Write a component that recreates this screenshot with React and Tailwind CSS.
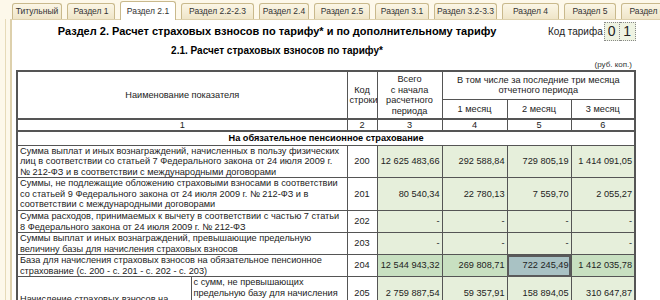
import React from "react";

const tabs = [
  { label: "Титульный", w: "w-[50px]" },
  { label: "Раздел 1", w: "w-[48px]" },
  { label: "Раздел 2.1", w: "w-[56px]", active: true },
  { label: "Раздел 2.2-2.3", w: "w-[73px]" },
  { label: "Раздел 2.4", w: "w-[50px]" },
  { label: "Раздел 2.5", w: "w-[56px]" },
  { label: "Раздел 3.1", w: "w-[54px]" },
  { label: "Раздел 3.2-3.3", w: "w-[63px]" },
  { label: "Раздел 4", w: "w-[57px]" },
  { label: "Раздел 5", w: "w-[52px]" },
  { label: "Раздел 6", w: "w-[52px]" },
];

const rows = [
  {
    name: "Сумма выплат и иных вознаграждений, начисленных в пользу физических лиц в соответствии со статьей 7 Федерального закона от 24 июля 2009 г. № 212-ФЗ и в соответствии с международными договорами",
    code: "200",
    h: "h-[32px]",
    vals: ["12 625 483,66", "292 588,84", "729 805,19", "1 414 091,05"],
  },
  {
    name: "Суммы, не подлежащие обложению страховыми взносами в соответствии со статьей 9 Федерального закона от 24 июля 2009 г. № 212-ФЗ и в соответствии с международными договорами",
    code: "201",
    h: "h-[33px]",
    vals: ["80 540,34", "22 780,13", "7 559,70", "2 055,27"],
  },
  {
    name: "Сумма расходов, принимаемых к вычету в соответствии с частью 7 статьи 8 Федерального закона от 24 июля 2009 г. № 212-ФЗ",
    code: "202",
    h: "h-[22px]",
    vals: ["-", "-", "-", "-"],
  },
  {
    name: "Суммы выплат и иных вознаграждений, превышающие предельную величину базы для начисления страховых взносов",
    code: "203",
    h: "h-[22px]",
    vals: ["-", "-", "-", "-"],
  },
  {
    name: "База для начисления страховых взносов на обязательное пенсионное страхование (с. 200 - с. 201 - с. 202 - с. 203)",
    code: "204",
    h: "h-[22px]",
    vals: ["12 544 943,32", "269 808,71", "722 245,49", "1 412 035,78"],
    dark: true,
  },
];

function App() {
  const cell = "border border-[#555] px-[2px] py-0";
  return (
    <div className="w-[660px] h-[300px] overflow-hidden bg-[#fdf8ea] font-['Liberation_Sans',Arial,sans-serif] text-[#222]">
      <div className="h-[19px] flex items-end gap-[5px] pl-[12px] whitespace-nowrap">
        {tabs.map((t) => (
          <div
            key={t.label}
            className={`${t.w} shrink-0 flex items-center justify-center border border-b-0 border-[#c9b98c] rounded-t-[3px] text-[8.5px] text-[#333] ${
              t.active ? "h-[19px] bg-white relative top-[1px]" : "h-[16px] bg-gradient-to-b from-[#fbf6e6] to-[#efe5c8]"
            }`}
          >
            {t.label}
          </div>
        ))}
      </div>

      <div className="flex h-[281px]">
        <div className="w-[10px] pl-[5px]">
          <div className="h-full border-l border-[#e6dab8]"></div>
        </div>
        <div className="flex-1 bg-white border-l-2 border-t border-[#ddd0ac] pl-[4px]">
          <div className="h-[20px] mt-[1px] flex items-center">
            <div className="w-[522px] text-center text-[11px] font-bold text-black">
              Раздел 2. Расчет страховых взносов по тарифу* и по дополнительному тарифу
            </div>
            <div className="ml-[10px] text-[10px] text-[#222]">Код тарифа</div>
            <div className="ml-[1px] flex h-[19px]">
              <div className="w-[16px] flex items-center justify-center bg-[#eef3e2] border border-dotted border-[#888] text-[14px]">0</div>
              <div className="w-[16px] flex items-center justify-center bg-[#eef3e2] border border-l-0 border-dotted border-[#888] text-[14px]">1</div>
            </div>
          </div>
          <div className="h-[19px] w-[522px] flex items-center justify-center text-[10px] font-bold text-black">
            2.1. Расчет страховых взносов по тарифу*
          </div>
          <div className="h-[10px] w-[618px] flex items-center justify-end text-[8px] text-[#333] pr-[2px]">
            (руб. коп.)
          </div>

          <table className="w-[618px] table-fixed border-collapse border-2 border-[#555] text-[9.2px] leading-[10.5px] text-[#222]">
            <colgroup>
              <col className="w-[174px]" />
              <col className="w-[156px]" />
              <col className="w-[30px]" />
              <col className="w-[65px]" />
              <col className="w-[65px]" />
              <col className="w-[64px]" />
              <col className="w-[64px]" />
            </colgroup>
            <tbody>
              <tr className="h-[28px]">
                <td colSpan={2} rowSpan={2} className={`${cell} text-center align-middle`}>Наименование показателя</td>
                <td rowSpan={2} className={`${cell} text-center`}>Код<br />строки</td>
                <td rowSpan={2} className={`${cell} text-center`}>Всего<br />с начала<br />расчетного<br />периода</td>
                <td colSpan={3} className={`${cell} text-center`}>В том числе за последние три месяца<br />отчетного периода</td>
              </tr>
              <tr className="h-[20px]">
                <td className={`${cell} text-center`}>1 месяц</td>
                <td className={`${cell} text-center`}>2 месяц</td>
                <td className={`${cell} text-center`}>3 месяц</td>
              </tr>
              <tr className="h-[12px] border-t-2 border-b-2 border-[#555]">
                <td colSpan={2} className={`${cell} text-center leading-[9px]`}>1</td>
                <td className={`${cell} text-center leading-[9px]`}>2</td>
                <td className={`${cell} text-center leading-[9px]`}>3</td>
                <td className={`${cell} text-center leading-[9px]`}>4</td>
                <td className={`${cell} text-center leading-[9px]`}>5</td>
                <td className={`${cell} text-center leading-[9px]`}>6</td>
              </tr>
              <tr className="h-[14px]">
                <td colSpan={7} className={`${cell} text-center font-bold text-black`}>На обязательное пенсионное страхование</td>
              </tr>
              {rows.map((r) => (
                <tr key={r.code} className={r.h}>
                  <td colSpan={2} className={`${cell} align-top`}>{r.name}</td>
                  <td className={`${cell} text-center`}>{r.code}</td>
                  {r.vals.map((v, i) => {
                    const selected = r.dark && i === 2;
                    return (
                      <td
                        key={i}
                        className={`${cell} text-right ${
                          selected
                            ? "bg-[#a9c2c4] outline-2 outline-[#5a5a5a] -outline-offset-2"
                            : r.dark
                            ? "bg-[#c8e0c1]"
                            : "bg-[#e6efdb]"
                        }`}
                      >
                        {v}
                      </td>
                    );
                  })}
                </tr>
              ))}
              <tr className="h-[34px]">
                <td rowSpan={2} className={`${cell} align-middle`}>Начисление страховых взносов на обязательное пенсионное страхование</td>
                <td className={`${cell} align-top`}>с сумм, не превышающих предельную базу для начисления страховых взносов</td>
                <td className={`${cell} text-center`}>205</td>
                <td className={`${cell} text-right bg-[#e6efdb]`}>2 759 887,54</td>
                <td className={`${cell} text-right bg-[#e6efdb]`}>59 357,91</td>
                <td className={`${cell} text-right bg-[#e6efdb]`}>158 894,05</td>
                <td className={`${cell} text-right bg-[#e6efdb]`}>310 647,87</td>
              </tr>
              <tr className="h-[22px]">
                <td className={cell}>с сумм, превышающих предельную базу</td>
                <td className={`${cell} text-center`}>206</td>
                <td className={`${cell} text-right bg-[#e6efdb]`}>-</td>
                <td className={`${cell} text-right bg-[#e6efdb]`}>-</td>
                <td className={`${cell} text-right bg-[#e6efdb]`}>-</td>
                <td className={`${cell} text-right bg-[#e6efdb]`}>-</td>
              </tr>
            </tbody>
          </table>
        </div>
      </div>
    </div>
  );
}

export default App;
